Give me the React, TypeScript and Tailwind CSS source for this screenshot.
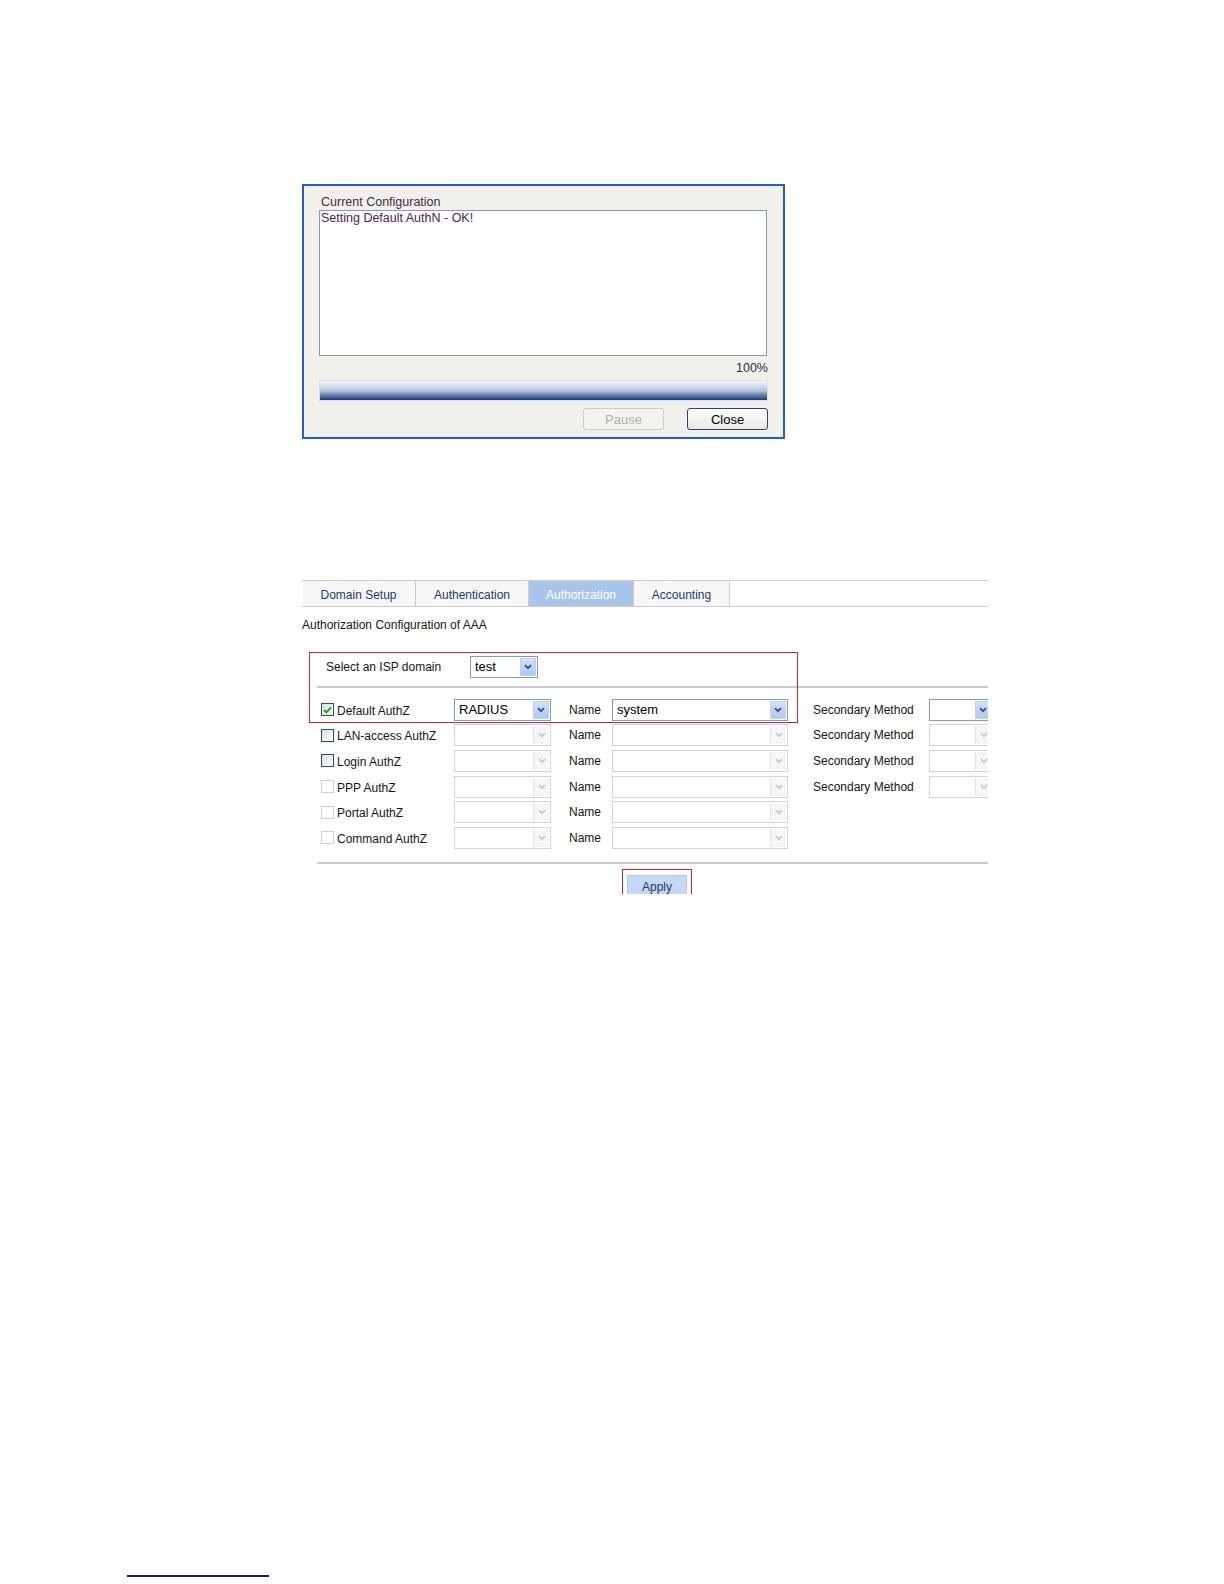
import React from "react";

const font = { fontFamily: '"Liberation Sans", Arial, sans-serif' };

type CheckKind = "checked" | "blue" | "gray";

const rows: { label: string; check: CheckKind; on: boolean; method: string; name: string; secondary: boolean }[] = [
	{ label: "Default AuthZ", check: "checked", on: true, method: "RADIUS", name: "system", secondary: true },
	{ label: "LAN-access AuthZ", check: "blue", on: false, method: "", name: "", secondary: true },
	{ label: "Login AuthZ", check: "blue", on: false, method: "", name: "", secondary: true },
	{ label: "PPP AuthZ", check: "gray", on: false, method: "", name: "", secondary: true },
	{ label: "Portal AuthZ", check: "gray", on: false, method: "", name: "", secondary: false },
	{ label: "Command AuthZ", check: "gray", on: false, method: "", name: "", secondary: false },
];

function Chevron({ on }: { on: boolean }) {
	return (
		<svg width="8" height="6" viewBox="0 0 8 6">
			<path d="M1 1.2 L4 4.2 L7 1.2" fill="none" stroke={on ? "#2f4f8f" : "#c9c9c9"} strokeWidth="1.8" />
		</svg>
	);
}

function Select({ value, on, width }: { value: string; on: boolean; width: string }) {
	return (
		<div
			className={`${width} h-[22px] flex items-stretch border bg-white shrink-0 ${on ? "border-[#7f9db9]" : "border-[#d4d4d4]"}`}
		>
			<span className="flex-1 pl-1 text-[13px] leading-[20px] text-black">{value}</span>
			<span
				className={`w-[16px] m-px flex items-center justify-center ${
					on ? "bg-gradient-to-b from-[#d3e0fa] to-[#b1c7f3] border border-[#c0d2f4]" : "bg-[#f6f6f6] border-l border-[#e2e2e2]"
				}`}
			>
				<Chevron on={on} />
			</span>
		</div>
	);
}

function Check({ kind }: { kind: CheckKind }) {
	if (kind === "gray") return <span className="w-[13px] h-[13px] border border-[#cfcfcf] bg-white shrink-0" />;
	return (
		<span className="w-[13px] h-[13px] border border-[#1c5180] bg-gradient-to-br from-[#dcdcd6] to-white shrink-0 flex items-center justify-center">
			{kind === "checked" && (
				<svg width="9" height="8" viewBox="0 0 9 8">
					<path d="M1 4 L3.4 6.4 L8 1.4" fill="none" stroke="#21a121" strokeWidth="2" />
				</svg>
			)}
		</span>
	);
}

function ProgressDialog() {
	return (
		<div className="ml-[302px] w-[483px] h-[255px] border-2 border-[#1d5fd3] bg-[#f1f0eb] pl-[15px] pt-[9px] text-[12.5px] text-[#3b2f48]">
			<div className="leading-[14px] pl-[2px]">Current Configuration</div>
			<div className="mt-px w-[448px] h-[146px] border border-[#7f9db9] bg-white px-px leading-[14px] text-[#4a2358]">
				Setting Default AuthN - OK!
			</div>
			<div className="w-[449px] mt-[5px] text-right leading-[14px] text-[#2e2e40]">100%</div>
			<div className="w-[449px] h-[21px] mt-[5px] border border-[#d9e1f0] bg-gradient-to-b from-[#f6f8fc] via-[#b6c3dc] to-[#1c3a78]" />
			<div className="w-[449px] mt-[7px] flex justify-end gap-[23px]">
				<button className="w-[81px] h-[22px] border border-[#d0cec2] rounded-[3px] bg-[#f4f3ee] text-[#b4b2a6] text-[13px] leading-none">
					Pause
				</button>
				<button className="w-[81px] h-[22px] border border-[#26466f] rounded-[3px] bg-gradient-to-b from-white to-[#e9e8e2] text-black text-[13px] leading-none">
					Close
				</button>
			</div>
		</div>
	);
}

function AuthPanel() {
	const tabs = [
		{ label: "Domain Setup", w: "w-[114px]" },
		{ label: "Authentication", w: "w-[113px]" },
		{ label: "Authorization", w: "w-[105px]", active: true },
		{ label: "Accounting", w: "w-[96px]" },
	];
	return (
		<div className="ml-[302px] mt-[141px] w-[686px] h-[314px] overflow-hidden relative text-[12px] text-[#151515]">
			{/* Tabs */}
			<div className="h-[27px] flex border-t border-b border-[#cdcdcd]">
				{tabs.map((t) => (
					<div
						key={t.label}
						className={`${t.w} border-r border-[#cdcdcd] flex items-center justify-center pt-[2px] ${
							t.active ? "bg-[#a9c5ec] text-white" : "bg-[#f7f7f7] text-[#1f3a6a]"
						}`}
					>
						{t.label}
					</div>
				))}
			</div>

			<div className="mt-[11px] leading-[14px]">Authorization Configuration of AAA</div>

			{/* ISP domain */}
			<div className="mt-[24px] h-[21px] flex items-center pl-[24px]">
				<span className="w-[144px] shrink-0">Select an ISP domain</span>
				<Select value="test" on width="w-[68px]" />
			</div>
			<div className="ml-[15px] mt-[9px] h-[2px] bg-[#cbcbcb]" />

			{/* Rows */}
			<div className="mt-[9px]">
				{rows.map((r) => (
					<div key={r.label} className="h-[25.6px] flex items-center pl-[19px]">
						<Check kind={r.check} />
						<span className="w-[120px] shrink-0 pl-[3px] pt-[2px]">{r.label}</span>
						<Select value={r.method} on={r.on} width="w-[97px]" />
						<span className="ml-[18px] w-[43px] shrink-0">Name</span>
						<Select value={r.name} on={r.on} width="w-[176px]" />
						{r.secondary && (
							<>
								<span className="ml-[25px] w-[116px] shrink-0">Secondary Method</span>
								<Select value="" on={r.on} width="w-[64px]" />
							</>
						)}
					</div>
				))}
			</div>
			<div className="ml-[15px] mt-[11px] h-[2px] bg-[#cbcbcb]" />

			{/* Apply */}
			<div className="mt-[11px] ml-[325px] w-[60px] h-[24px] bg-[#c5d8f5] border border-[#b3c8ea] flex items-center justify-center text-[#1f3a6a]">
				Apply
			</div>

			{/* annotation boxes */}
			<div className="absolute left-[7px] top-[72px] w-[489px] h-[71px] border border-[#c8282b]" />
			<div className="absolute left-[320px] top-[289px] w-[70px] h-[40px] border border-[#c8282b]" />
		</div>
	);
}

export default function App() {
	return (
		<div className="w-[1224px] h-[1584px] bg-white pt-[184px]" style={font}>
			<ProgressDialog />
			<AuthPanel />
			<div className="ml-[127px] mt-[681px] w-[142px] h-[1.5px] bg-[#16168c]" />
		</div>
	);
}
